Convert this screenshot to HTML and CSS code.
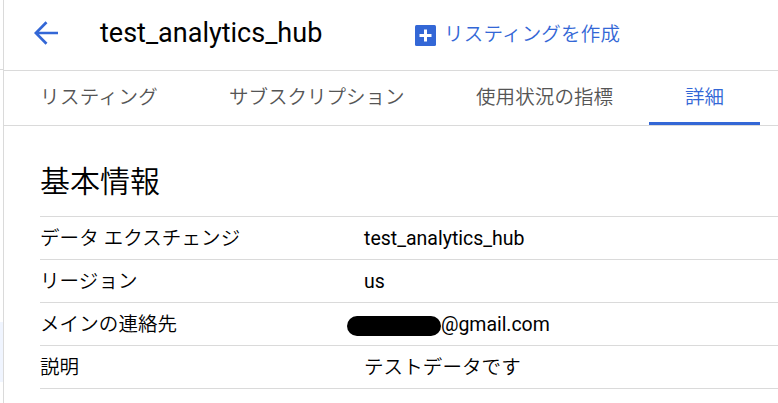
FILE: index.html
```
<!DOCTYPE html>
<html lang="ja">
<head>
    <meta charset="UTF-8">
    <meta name="viewport" content="width=device-width, initial-scale=1">
    <title>test_analytics_hub</title>
    <link rel="stylesheet" href="styles.css">
</head>
<body>
<div class="page">
    <div class="sidebar">
        <div class="sidebar-top"></div>
        <div class="sidebar-item"></div>
    </div>

    <main class="content">
        <header class="header">
            <svg class="back" width="24" height="24" viewBox="0 0 24 24">
                <path d="M24 12H2M12.5 1.3L1.8 12l10.7 10.7" fill="none" stroke="#3367d6" stroke-width="2.7"/>
            </svg>
            <h1 class="title">test_analytics_hub</h1>
            <a class="create">
                <svg width="21" height="21" viewBox="0 0 21 21">
                    <rect width="21" height="21" rx="1.5" fill="#3367d6"/>
                    <path d="M10.5 4.5v12M4.5 10.5h12" stroke="#fff" stroke-width="3"/>
                </svg>
                <span>リスティングを作成</span>
            </a>
        </header>

        <nav class="tabs">
            <a class="tab tab-listing">リスティング</a>
            <a class="tab tab-subscription">サブスクリプション</a>
            <a class="tab tab-usage">使用状況の指標</a>
            <a class="tab tab-detail active">詳細</a>
        </nav>

        <section class="info">
            <h2 class="info-title">基本情報</h2>
            <dl class="rows">
                <div class="row">
                    <dt>データ エクスチェンジ</dt>
                    <dd>test_analytics_hub</dd>
                </div>
                <div class="row">
                    <dt>リージョン</dt>
                    <dd>us</dd>
                </div>
                <div class="row">
                    <dt>メインの連絡先</dt>
                    <dd class="mail"><span class="mask"></span>@gmail.com</dd>
                </div>
                <div class="row">
                    <dt>説明</dt>
                    <dd class="jp">テストデータです</dd>
                </div>
            </dl>
        </section>
    </main>
</div>
</body>
</html>
```
FILE: styles.css
```
* {
    box-sizing: border-box;
}

body {
    margin: 0;
    background: #fff;
    color: #000;
    font-family: Roboto, "Noto Sans CJK JP", sans-serif;
    font-size: 19.5px;
    font-weight: 400;
}

.page {
    display: flex;
    height: 403px;
    overflow: hidden;
}

/* edge of the side menu */
.sidebar {
    width: 4px;
    border-right: 1px solid #dadada;
    display: flex;
    flex-direction: column;
    justify-content: space-between;
    padding-bottom: 21px;
}

.sidebar-top {
    height: 70px;
    border-bottom: 1px solid #dadada;
}

.sidebar-item {
    height: 60px;
    background: #f0f5ff;
}

.content {
    flex: 1;
    min-width: 0;
}

.header {
    height: 71px;
    padding: 0 0 4px 30px;
    border-bottom: 1px solid #dadada;
    display: flex;
    align-items: center;
}

.title {
    margin: 0 0 0 42px;
    width: 315px;
    font-size: 27px;
    font-weight: 400;
    line-height: 32px;
}

.create {
    display: flex;
    align-items: center;
    gap: 8px;
    padding-top: 4px;
    color: #3367d6;
    line-height: 24px;
    font-weight: 350;
    letter-spacing: 0.2px;
}

.tabs {
    display: flex;
    height: 55px;
    border-bottom: 1px solid #dadada;
    color: #555;
    font-weight: 350;
}

.tab {
    line-height: 54px;
    height: 54px;
    padding: 0 36px;
    white-space: nowrap;
}

.tab-listing {
    width: 189px;
    letter-spacing: 0.4px;
}

.tab-subscription {
    width: 247px;
}

.tab-usage {
    width: 209px;
    letter-spacing: 0.1px;
}

.tab-detail {
    width: 111px;
}

.active {
    color: #3367d6;
    border-bottom: 3px solid #3367d6;
}

.info {
    padding: 36px 0 0 36px;
}

.info-title {
    margin: 0;
    height: 54px;
    font-size: 30px;
    font-weight: 350;
    line-height: 40px;
}

.rows {
    margin: 0;
    border-top: 1px solid #dadada;
}

.row {
    display: flex;
    height: 43px;
    border-bottom: 1px solid #dadada;
    line-height: 44px;
}

.row dt {
    width: 324px;
    font-weight: 350;
    letter-spacing: 0.1px;
}

.row dd {
    margin: 0;
}

.row .jp {
    font-weight: 350;
    letter-spacing: 0.1px;
}

.row .mail {
    display: flex;
    margin-left: -17px;
    letter-spacing: -0.05px;
}

.mask {
    width: 94px;
    height: 20px;
    margin-top: 13px;
    border-radius: 10px;
    background: #000;
}
```
